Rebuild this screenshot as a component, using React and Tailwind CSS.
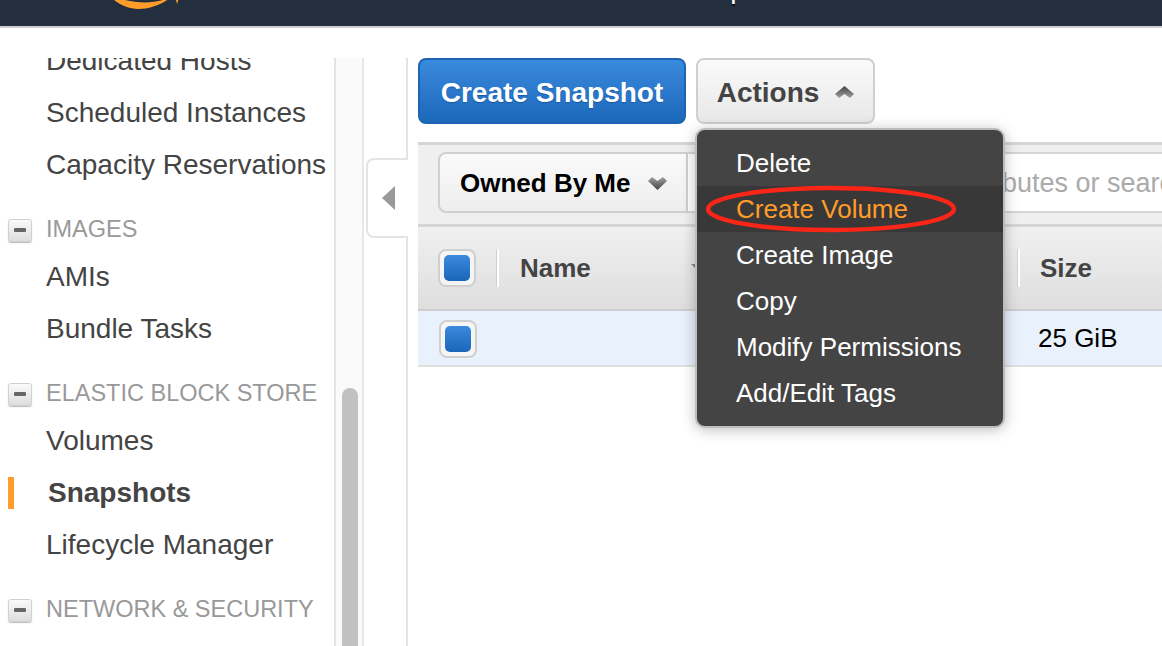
const font = { fontFamily: '"Liberation Sans", Arial, sans-serif' }

function Collapse() {
  return (
    <span className="mr-[14px] ml-[8px] flex h-[23px] w-[24px] shrink-0 items-center justify-center rounded-[3px] border border-[#d0d0d0] bg-gradient-to-b from-[#fafafa] to-[#dedede] shadow-[0_1px_1px_#bbb]">
      <span className="h-[4px] w-[12px] rounded-[1px] bg-[#666]" />
    </span>
  )
}

function NavItem({ children }) {
  return <div className="flex h-[52px] items-center pl-[46px] text-[28px] whitespace-nowrap text-[#444]">{children}</div>
}

function NavGroup({ children }) {
  return (
    <div className="mt-[13px] -mb-[5px] flex h-[52px] items-center text-[23.5px] whitespace-nowrap text-[#999]">
      <Collapse />
      {children}
    </div>
  )
}

function Sidebar() {
  return (
    <aside className="h-full w-[336px] shrink-0 overflow-hidden border-r-2 border-[#e4e4e4]">
      <div className="-mt-[23px]">
        <NavItem>Dedicated Hosts</NavItem>
        <NavItem>Scheduled Instances</NavItem>
        <NavItem>Capacity Reservations</NavItem>
        <NavGroup>IMAGES</NavGroup>
        <NavItem>AMIs</NavItem>
        <NavItem>Bundle Tasks</NavItem>
        <NavGroup>ELASTIC BLOCK STORE</NavGroup>
        <NavItem>Volumes</NavItem>
        <div className="flex h-[52px] items-center pl-[8px] text-[28px] font-bold text-[#444]">
          <span className="mr-[34px] h-[32px] w-[6px] bg-[#ff9c2a]" />
          Snapshots
        </div>
        <NavItem>Lifecycle Manager</NavItem>
        <NavGroup>NETWORK &amp; SECURITY</NavGroup>
        <NavItem>Security Groups</NavItem>
      </div>
    </aside>
  )
}

function Scrollbar() {
  return (
    <div className="h-full w-[28px] shrink-0 border-r-2 border-[#e8e8e8] bg-[#fafafa] pt-[330px] pl-[6px]">
      <div className="h-full w-[16px] rounded-t-[8px] bg-[#c1c1c1]" />
    </div>
  )
}

function Check({ className = "" }) {
  return (
    <span className={`flex h-[38px] w-[38px] shrink-0 items-center justify-center rounded-[8px] border-2 border-[#cfcfcf] bg-[#f5f5f5] ${className}`}>
      <span className="h-[26px] w-[26px] rounded-[5px] bg-gradient-to-b from-[#3a8ade] to-[#1a66b8]" />
    </span>
  )
}

function ChevronUp() {
  return (
    <svg width="19" height="13" viewBox="0 0 19 13">
      <defs>
        <linearGradient id="chevUp" x1="0" y1="0" x2="0" y2="1">
          <stop offset="0" stopColor="#444" />
          <stop offset="1" stopColor="#a0a0a0" />
        </linearGradient>
      </defs>
      <path d="M0 8 L9.5 0 L19 8 L15 12 L9.5 8 L4 12 Z" fill="url(#chevUp)" />
    </svg>
  )
}

function ChevronDown() {
  return (
    <svg width="19" height="13" viewBox="0 0 19 13">
      <defs>
        <linearGradient id="chevDown" x1="0" y1="0" x2="0" y2="1">
          <stop offset="0" stopColor="#a0a0a0" />
          <stop offset="1" stopColor="#444" />
        </linearGradient>
      </defs>
      <path d="M0 4 L4 0 L9.5 4 L15 0 L19 4 L9.5 13 Z" fill="url(#chevDown)" />
    </svg>
  )
}

function Divider({ className = "" }) {
  return <span className={`h-[38px] w-[3px] shrink-0 border-l border-[#cfcfcf] bg-white ${className}`} />
}

function Menu() {
  const items = ["Delete", "Create Volume", "Create Image", "Copy", "Modify Permissions", "Add/Edit Tags"]
  return (
    <div className="absolute top-[128px] left-[695px] w-[310px] rounded-[10px] border-2 border-[#bdbdbd] bg-[#444] py-[10px] text-[26px] text-white shadow-[0_2px_14px_rgba(0,0,0,0.25)]">
      {items.map((item) => (
        <div
          key={item}
          className={`flex h-[46px] items-center pl-[39px] ${item === "Create Volume" ? "bg-[#383838] text-[#ff9c2a]" : ""}`}
        >
          {item}
        </div>
      ))}
    </div>
  )
}

export default function App() {
  return (
    <div style={font} className="relative h-[646px] w-[1162px] overflow-hidden bg-white">
      <header className="flex h-[28px] items-start overflow-hidden border-b-2 border-[#cfcfcf] bg-[#232f3e] text-[28px] leading-[32px] whitespace-nowrap text-white">
        <svg className="mt-[-8px] ml-[100px] shrink-0" width="90" height="20" viewBox="0 0 90 20">
          <path d="M6 0 C24 12 56 14 72 4 C64 12 50 17 38 17 C26 17 14 10 6 0 Z" fill="#ff9c2a" />
          <path d="M75 4 L81 0 L77 12 Z" fill="#ff9c2a" />
        </svg>
        <span className="mt-[-27px] ml-[107px] [text-shadow:0_2px_0_#111]">Services</span>
        <span className="mt-[-27px] ml-[136px] [text-shadow:0_2px_0_#111]">Resource Groups</span>
      </header>

      <div className="flex h-[618px] pt-[30px]">
        <Sidebar />
        <Scrollbar />
        <div className="h-full w-[44px] shrink-0 border-r-2 border-[#e4e4e4]" />

        <main className="min-w-0 flex-1 pl-[10px]">
          <div className="flex gap-[10px]">
            <button className="flex h-[66px] w-[268px] items-center justify-center rounded-[8px] border-2 border-[#1d65b0] bg-gradient-to-b from-[#3a8ade] to-[#1c68bb] pt-[3px] text-[28px] font-bold text-white [text-shadow:0_1px_1px_#1a5aa0]">
              Create Snapshot
            </button>
            <button className="flex h-[66px] w-[179px] items-center justify-center gap-[16px] rounded-[8px] border-2 border-[#cfcfcf] bg-gradient-to-b from-[#fafafa] to-[#e8e8e8] pt-[3px] text-[28px] font-bold text-[#444]">
              Actions
              <ChevronUp />
            </button>
          </div>

          <div className="mt-[18px] flex h-[85px] items-start border-y-[3px] border-[#d5d5d5] bg-[#efefef] pt-[7px] pl-[20px]">
            <div className="flex h-[61px] w-[250px] items-center gap-[18px] rounded-l-[8px] border-2 border-[#cfcfcf] bg-gradient-to-b from-[#fafafa] to-[#eeeeee] pt-[2px] pl-[20px] text-[26px] font-bold text-black">
              Owned By Me
              <ChevronDown />
            </div>
            <div className="flex h-[61px] min-w-0 flex-1 items-center justify-end overflow-hidden border-y-2 border-[#d5d5d5] bg-white pt-[2px] text-[27px] whitespace-nowrap text-[#aaa]">
              <span className="-mr-[26px]">Filter by tags and attributes or search</span>
            </div>
          </div>

          <div className="flex h-[84px] items-center border-b-2 border-[#cdcdcd] bg-gradient-to-b from-[#f0f0f0] to-[#dedede] pl-[20px] text-[26px] font-bold text-[#444]">
            <Check />
            <Divider className="mr-[21px] ml-[20px]" />
            <span className="flex flex-1 items-center">
              Name
              <span className="ml-[100px] h-0 w-0 border-x-[8px] border-t-[8px] border-x-transparent border-t-[#888]" />
            </span>
            <Divider className="mr-[20px]" />
            <span className="w-[122px]">Size</span>
          </div>

          <div className="flex h-[56px] items-center border-b-2 border-[#dfdfdf] bg-[#e9f1fc] pt-[1px] pl-[21px] text-[26px] text-black">
            <Check />
            <span className="flex-1" />
            <span className="w-[124px]">25 GiB</span>
          </div>
        </main>
      </div>

      <div className="absolute top-[158px] left-[366px] flex h-[80px] w-[42px] items-center rounded-l-[8px] border-y-2 border-l-2 border-[#e4e4e4] bg-white pl-[14px]">
        <span className="h-0 w-0 border-y-[12px] border-r-[13px] border-y-transparent border-r-[#999]" />
      </div>

      <Menu />

      <svg className="absolute top-[185px] left-[704px]" width="256" height="48" viewBox="0 0 256 48" fill="none">
        <ellipse cx="127" cy="24" rx="123" ry="21" stroke="#fb2518" strokeWidth="4.5" />
      </svg>
    </div>
  )
}
